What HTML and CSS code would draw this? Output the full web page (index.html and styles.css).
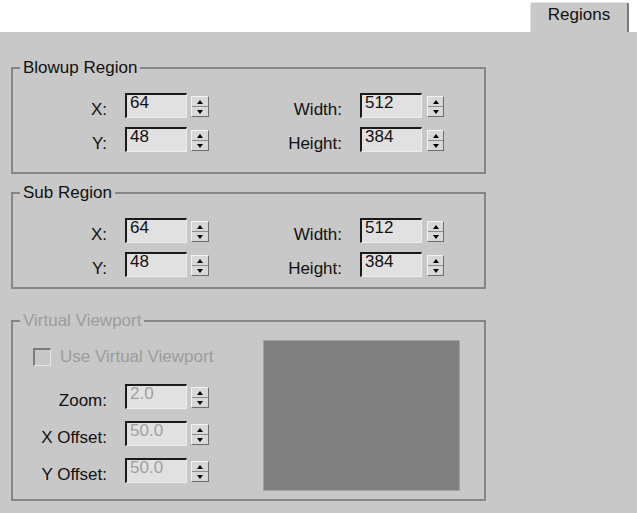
FILE: index.html
```html
<!DOCTYPE html>
<html>
<head>
<meta charset="utf-8">
<link rel="stylesheet" href="styles.css">
</head>
<body>
<div class="tabs"><div class="tab">Regions</div></div>
<div class="panel">
  <fieldset class="group g-blowup">
    <legend>Blowup Region</legend>
    <div class="grid">
      <div class="field"><span class="lbl">X:</span><span class="input">64</span><span class="spin"><span class="up"></span><span class="down"></span></span></div>
      <div class="field col2"><span class="lbl">Width:</span><span class="input">512</span><span class="spin"><span class="up"></span><span class="down"></span></span></div>
      <div class="field"><span class="lbl">Y:</span><span class="input">48</span><span class="spin"><span class="up"></span><span class="down"></span></span></div>
      <div class="field col2"><span class="lbl">Height:</span><span class="input">384</span><span class="spin"><span class="up"></span><span class="down"></span></span></div>
    </div>
  </fieldset>
  <fieldset class="group g-sub">
    <legend>Sub Region</legend>
    <div class="grid">
      <div class="field"><span class="lbl">X:</span><span class="input">64</span><span class="spin"><span class="up"></span><span class="down"></span></span></div>
      <div class="field col2"><span class="lbl">Width:</span><span class="input">512</span><span class="spin"><span class="up"></span><span class="down"></span></span></div>
      <div class="field"><span class="lbl">Y:</span><span class="input">48</span><span class="spin"><span class="up"></span><span class="down"></span></span></div>
      <div class="field col2"><span class="lbl">Height:</span><span class="input">384</span><span class="spin"><span class="up"></span><span class="down"></span></span></div>
    </div>
  </fieldset>
  <fieldset class="group g-virtual">
    <legend class="disabled">Virtual Viewport</legend>
    <div class="vv">
      <div class="vv-left">
        <div class="check-row"><span class="check"></span><span class="disabled">Use Virtual Viewport</span></div>
        <div class="vv-rows">
          <div class="field"><span class="lbl">Zoom:</span><span class="input off">2.0</span><span class="spin"><span class="up"></span><span class="down"></span></span></div>
          <div class="field"><span class="lbl">X Offset:</span><span class="input off">50.0</span><span class="spin"><span class="up"></span><span class="down"></span></span></div>
          <div class="field"><span class="lbl">Y Offset:</span><span class="input off">50.0</span><span class="spin"><span class="up"></span><span class="down"></span></span></div>
        </div>
      </div>
      <div class="preview"></div>
    </div>
  </fieldset>
</div>
</body>
</html>
```
FILE: styles.css
```css
html, body {
  margin: 0;
  padding: 0;
}
body {
  width: 637px;
  height: 513px;
  overflow: hidden;
  background: #c8c8c8;
  font-family: "Liberation Sans", Arial, sans-serif;
  font-size: 17px;
  color: #111;
}
.tabs {
  height: 32px;
  background: #fff;
  display: flex;
  justify-content: flex-end;
  align-items: flex-end;
  padding-right: 8px;
  box-sizing: border-box;
}
.tab {
  width: 99px;
  height: 30px;
  box-sizing: border-box;
  background: #c8c8c8;
  border-top: 1px solid #e4e4e4;
  border-left: 1px solid #e4e4e4;
  border-right: 2px solid #7a7a7a;
  border-radius: 3px 3px 0 0;
  text-align: center;
  line-height: 23px;
}
.panel {
  padding: 26px 0 0 11px;
}
.group {
  margin: 0;
  width: 475px;
  box-sizing: border-box;
  min-width: 0;
  border: 2px solid #868686;
  padding: 0;
}
.group legend {
  padding: 0 3px;
  margin-left: 7px;
  line-height: 20px;
  height: 20px;
}
.g-blowup {
  padding: 15px 0 20px 0;
}
.g-sub {
  margin-top: 9px;
  padding: 15px 0 10px 0;
}
.g-virtual {
  margin-top: 22px;
  padding: 9px 0 8px 0;
}
.grid {
  display: grid;
  grid-template-columns: 196px 235px;
  row-gap: 9px;
}
.field {
  display: flex;
  align-items: flex-start;
  height: 25px;
}
.lbl {
  width: 94px;
  margin-right: 18px;
  text-align: right;
  padding-top: 7px;
  line-height: 20px;
  white-space: nowrap;
}
.col2 .lbl {
  width: 133px;
}
.input {
  width: 62px;
  height: 25px;
  box-sizing: border-box;
  border-style: solid;
  border-width: 2px 1px 1px 2px;
  border-color: #1a1a1a #ededed #ededed #1a1a1a;
  background: #e1e1e1;
  padding-left: 3px;
  line-height: 16px;
}
.input.off {
  color: #a0a0a0;
}
.spin {
  width: 18px;
  height: 21px;
  margin-top: 3px;
  margin-left: 4px;
  box-sizing: border-box;
  border: 1px solid;
  border-color: #f4f4f4 #6e6e6e #6e6e6e #f4f4f4;
  background: #d8d8d8;
  display: flex;
  flex-direction: column;
}
.col2 .spin {
  margin-left: 5px;
  width: 17px;
}
.spin span {
  flex: 1;
  display: flex;
  align-items: center;
  justify-content: center;
}
.spin span + span {
  border-top: 1px solid #8c8c8c;
}
.spin span::after {
  content: "";
  border-left: 3px solid transparent;
  border-right: 3px solid transparent;
}
.spin .up::after {
  border-bottom: 4px solid #000;
}
.spin .down::after {
  border-top: 4px solid #000;
}
.disabled {
  color: #9c9c9c;
}
.vv {
  display: flex;
}
.vv-left {
  width: 250px;
}
.check-row {
  margin-top: 7px;
  height: 20px;
  display: flex;
  align-items: center;
  line-height: 20px;
}
.check {
  width: 18px;
  height: 18px;
  box-sizing: border-box;
  margin-left: 20px;
  margin-right: 9px;
  border-style: solid;
  border-width: 2px 1px 1px 2px;
  border-color: #7c7c7c #e6e6e6 #e6e6e6 #7c7c7c;
  background: #c8c8c8;
}
.vv-rows {
  margin-top: 17px;
  display: flex;
  flex-direction: column;
  gap: 12px;
}
.preview {
  width: 197px;
  height: 151px;
  box-sizing: border-box;
  background: #808080;
  border: 1px solid #a2a2a2;
}
```
